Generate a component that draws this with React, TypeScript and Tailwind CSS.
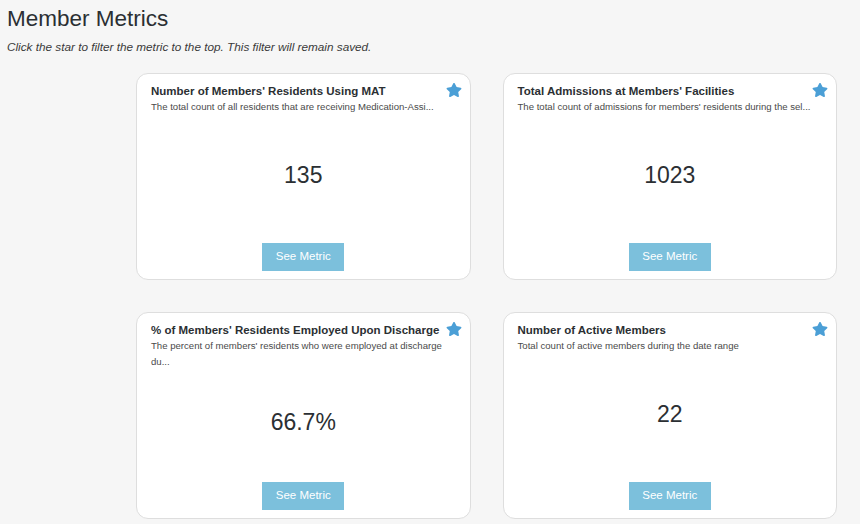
import { FaStar } from 'react-icons/fa'

interface Metric {
  title: string
  description: string
  value: string
}

const metrics: Metric[] = [
  {
    title: "Number of Members' Residents Using MAT",
    description: 'The total count of all residents that are receiving Medication-Assi...',
    value: '135',
  },
  {
    title: "Total Admissions at Members' Facilities",
    description: "The total count of admissions for members' residents during the sel...",
    value: '1023',
  },
  {
    title: "% of Members' Residents Employed Upon Discharge",
    description: "The percent of members' residents who were employed at discharge du...",
    value: '66.7%',
  },
  {
    title: 'Number of Active Members',
    description: 'Total count of active members during the date range',
    value: '22',
  },
]

const MetricCard = ({ metric }: { metric: Metric }) => (
  <div className="relative flex h-[207px] flex-col rounded-xl border border-[#dedede] bg-white px-[14px] pb-2 pt-[10px]">
    <FaStar className="absolute right-[8px] top-[8px] h-[16px] w-[16px] text-[#4b9fd6]" />
    <h3 className="pr-3 text-[11.5px] font-bold leading-[15px] text-[#2b2f33]">{metric.title}</h3>
    <p className="w-[300px] text-[9.6px] leading-[16px] text-[#4a4a4a]">{metric.description}</p>
    <div className="flex flex-1 items-center justify-center pb-[6px] text-[23px] text-[#2b2f33]">{metric.value}</div>
    <div className="flex justify-center">
      <button className="h-[28px] w-[82px] bg-[#7cc0dc] text-[11.5px] text-white">See Metric</button>
    </div>
  </div>
)

const App = () => {
  return (
    <div className="min-h-screen bg-[#f6f6f6] font-['Liberation_Sans',Arial,sans-serif]">
      <div className="px-[7px] pt-[4px]">
        <h1 className="text-[22.5px] leading-[30px] text-[#2b2f33]">Member Metrics</h1>
        <p className="mt-[4px] text-[11.75px] italic text-[#3a3a3a]">
          Click the star to filter the metric to the top. This filter will remain saved.
        </p>
      </div>
      <div className="ml-[136px] mt-[17px] grid w-[701px] grid-cols-2 gap-x-[32px] gap-y-[32px]">
        {metrics.map((m) => (
          <MetricCard key={m.title} metric={m} />
        ))}
      </div>
    </div>
  )
}

export default App
